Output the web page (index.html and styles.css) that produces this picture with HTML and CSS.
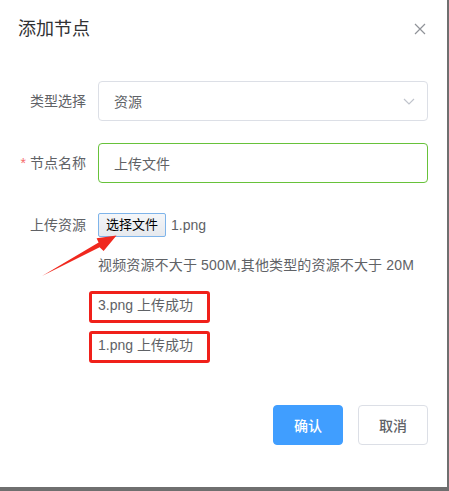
FILE: index.html
```html
<!DOCTYPE html>
<html lang="zh">
<head>
<meta charset="utf-8">
<title>添加节点</title>
<link rel="stylesheet" href="styles.css">
</head>
<body>
<div class="dialog">
  <div class="header">
    <span class="title">添加节点</span>
    <span class="close">
      <svg width="12" height="12" viewBox="0 0 12 12"><path d="M1 1 L11 11 M11 1 L1 11" stroke="#909399" stroke-width="1.2" fill="none"/></svg>
    </span>
  </div>
  <div class="body">
    <div class="form-item">
      <label class="label">类型选择</label>
      <div class="content">
        <div class="field select">
          <span>资源</span>
          <svg width="12" height="7" viewBox="0 0 12 7"><path d="M1 1 L6 6 L11 1" stroke="#c0c4cc" stroke-width="1.2" fill="none"/></svg>
        </div>
      </div>
    </div>
    <div class="form-item">
      <label class="label"><span class="req">*</span>节点名称</label>
      <div class="content">
        <div class="field success">上传文件</div>
      </div>
    </div>
    <div class="form-item">
      <label class="label">上传资源</label>
      <div class="content">
        <div class="file">
          <span class="file-btn">选择文件</span>
          <span class="file-name">1.png</span>
        </div>
        <div class="line hint">视频资源不大于 500M,其他类型的资源不大于 20M</div>
        <div class="line ok">3.png 上传成功</div>
        <div class="line ok">1.png 上传成功</div>
      </div>
    </div>
  </div>
  <div class="footer">
    <button class="btn primary">确认</button>
    <button class="btn">取消</button>
  </div>
  <svg class="annot" width="447" height="487" viewBox="0 0 447 487">
    <polygon points="42,276 99.6,247.2 103.6,251 116.5,235.5 96.6,238.2 98.6,242.6" fill="#f0281e"/>
  </svg>
</div>
</body>
</html>
```
FILE: styles.css
```css
*, *::before, *::after { box-sizing: border-box; }
html, body { margin: 0; padding: 0; }
body {
  background: #6f6f6f;
  width: 449px;
  height: 491px;
  font-family: "Liberation Sans", "Noto Sans CJK SC", sans-serif;
  font-size: 14px;
  color: #606266;
}
.dialog {
  position: relative;
  width: 447px;
  height: 487px;
  background: #fff;
}
.header {
  display: flex;
  justify-content: space-between;
  align-items: center;
  padding: 17px 21px 10px 18px;
}
.title {
  font-size: 18px;
  line-height: 24px;
  color: #303133;
}
.close { display: flex; }
.body {
  padding: 30px 19px 30px 18px;
}
.form-item {
  display: flex;
  margin-bottom: 22px;
}
.form-item:last-child { margin-bottom: 0; }
.label {
  width: 80px;
  flex: none;
  text-align: right;
  padding-right: 12px;
  line-height: 40px;
  color: #606266;
}
.req {
  color: #f56c6c;
  margin-right: 4px;
}
.content { flex: 1; }
.field {
  height: 40px;
  border: 1px solid #dcdfe6;
  border-radius: 4px;
  padding: 0 15px;
  display: flex;
  align-items: center;
  color: #606266;
}
.select {
  justify-content: space-between;
  padding-right: 12px;
}
.success { border-color: #67c23a; }
.file {
  height: 40px;
  display: flex;
  align-items: center;
}
.file-btn {
  height: 24px;
  line-height: 22px;
  padding: 0 7px;
  font-size: 13px;
  color: #000;
  border: 1px solid #7eb4ea;
  border-radius: 2px;
  background: linear-gradient(#f4f6f9, #e6e9ee);
}
.file-name {
  margin-left: 5px;
  color: #606266;
}
.line {
  line-height: 40px;
  color: #606266;
}
.hint { letter-spacing: 0.15px; }
.ok { position: relative; }
.ok::after {
  content: "";
  position: absolute;
  left: -9px;
  top: 6px;
  width: 121px;
  height: 32px;
  border: 3px solid #f0201a;
  border-radius: 3px;
}
.footer {
  display: flex;
  justify-content: flex-end;
  gap: 15px;
  padding: 10px 19px 20px 20px;
}
.btn {
  width: 70px;
  height: 40px;
  font-family: inherit;
  font-size: 14px;
  font-weight: 500;
  border: 1px solid #dcdfe6;
  border-radius: 4px;
  background: #fff;
  color: #606266;
  padding: 0;
}
.primary {
  background: #409eff;
  border-color: #409eff;
  color: #fff;
}
.annot {
  position: absolute;
  left: 0;
  top: 0;
  pointer-events: none;
}
```
